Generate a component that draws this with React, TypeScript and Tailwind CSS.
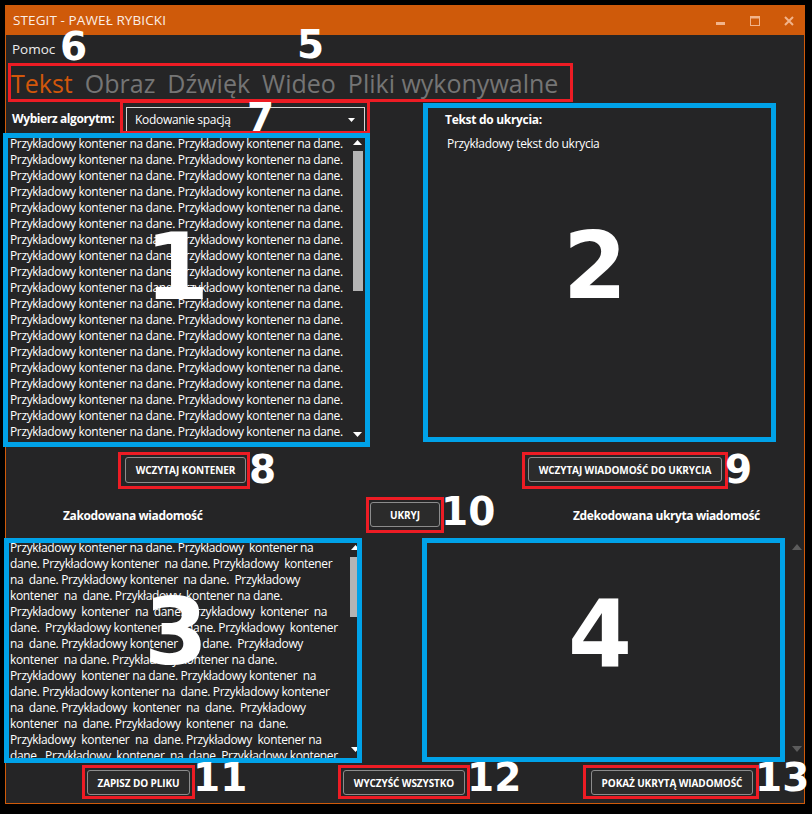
import React from 'react';

const kontenerLine = 'Przykładowy kontener na dane. Przykładowy kontener na dane.';

const encodedLines = [
  'Przykładowy kontener na dane. Przykładowy  kontener na',
  'dane. Przykładowy kontener  na dane. Przykładowy  kontener',
  'na  dane. Przykładowy kontener  na dane.  Przykładowy',
  'kontener  na  dane. Przykładowy  kontener na dane.',
  'Przykładowy  kontener  na  dane.  Przykładowy  kontener  na',
  'dane.  Przykładowy kontener  na  dane. Przykładowy  kontener',
  'na  dane. Przykładowy kontener  na  dane.  Przykładowy',
  'kontener  na dane. Przykładowy kontener na dane.',
  'Przykładowy  kontener na dane. Przykładowy kontener  na',
  'dane. Przykładowy kontener na  dane. Przykładowy kontener',
  'na  dane. Przykładowy  kontener  na  dane.  Przykładowy',
  'kontener  na  dane. Przykładowy  kontener  na  dane.',
  'Przykładowy  kontener  na  dane. Przykładowy  kontener na',
  'dane.  Przykładowy  kontener  na  dane. Przykładowy kontener',
];

// obramowanie adnotacji rysowane nad zawartością
const Mark = ({ blue, className, children }: { blue?: boolean; className?: string; children?: React.ReactNode }) => (
  <div className={`relative shrink-0 ${className ?? ''}`}>
    {children}
    <div
      className={`pointer-events-none absolute inset-0 ${
        blue ? 'border-[5px] border-[#00a2e8]' : 'border-[3px] border-[#ed1c24]'
      }`}
    />
  </div>
);

const Btn = ({ className, children }: { className?: string; children: React.ReactNode }) => (
  <button
    className={`flex items-center justify-center whitespace-nowrap rounded-[3px] border border-[#8c8c8c] bg-[#2b2b2b] text-[10px] font-bold leading-none tracking-[-0.1px] text-white ${className ?? ''}`}
  >
    {children}
  </button>
);

const Arrow = ({ up, className }: { up?: boolean; className?: string }) => (
  <svg width="9" height="5" viewBox="0 0 9 5" className={className}>
    {up ? <polygon points="0,5 9,5 4.5,0" fill="currentColor" /> : <polygon points="0,0 9,0 4.5,5" fill="currentColor" />}
  </svg>
);

const Num = ({ className, children }: { className: string; children: React.ReactNode }) => (
  <span className={`pointer-events-none absolute font-['DejaVu_Sans',sans-serif] font-bold leading-none text-white ${className}`}>
    {children}
  </span>
);

const App = () => {
  return (
    <div className="relative h-[814px] w-[812px] overflow-hidden bg-black font-['Open_Sans','Noto_Sans',sans-serif] text-white">
      <div className="ml-[5px] mt-[5px] flex h-[799px] w-[800px] flex-col border border-[#cf5a0a] bg-[#252526]">
        {/* pasek tytułu */}
        <div className="flex h-[29px] shrink-0 items-center bg-[#cf5a0a] pl-[7px] pr-[10px]">
          <span className="text-[13.5px] tracking-[0.1px] text-[#fbeee6]">STEGIT - PAWEŁ RYBICKI</span>
          <div className="ml-auto flex items-center gap-[24px] text-[#f2b48b]">
            <svg width="10" height="10" viewBox="0 0 10 10">
              <rect x="0" y="6" width="9" height="3" fill="currentColor" />
            </svg>
            <svg width="10" height="10" viewBox="0 0 10 10">
              <rect x="0.5" y="0.5" width="9" height="9" fill="none" stroke="currentColor" />
              <rect x="0" y="0" width="10" height="2.5" fill="currentColor" />
            </svg>
            <svg width="10" height="10" viewBox="0 0 10 10">
              <path d="M1 1 L9 9 M9 1 L1 9" stroke="currentColor" strokeWidth="2" />
            </svg>
          </div>
        </div>

        {/* menu */}
        <div className="flex h-[28px] shrink-0 items-center pl-[6px] text-[13.5px] text-[#ececec]">Pomoc</div>

        {/* zakładki */}
        <Mark className="ml-[2px] h-[39px] w-[565px]">
          <div className="flex h-full items-center gap-[12px] pl-[3px] pt-[2px] text-[25px] leading-none text-[#757575]">
            <span className="text-[#d2570b]">Tekst</span>
            <span>Obraz</span>
            <span>Dźwięk</span>
            <span>Wideo</span>
            <span>Pliki wykonywalne</span>
          </div>
        </Mark>

        <div className="-mt-[2px] flex shrink-0">
          {/* lewa kolumna */}
          <div className="-ml-[3px] flex w-[367px] flex-col">
            <div className="flex h-[34px] items-center justify-between">
              <span className="ml-[9px] whitespace-nowrap pt-[3px] text-[12px] font-bold tracking-[-0.4px]">Wybierz algorytm:</span>
              <Mark className="h-[34px] w-[250px] pl-[6px] pt-[7px]">
                <div className="flex h-[26px] w-[239px] items-center border border-[#d8d8d8] pl-[8px] pr-[9px] text-[12px] tracking-[-0.3px]">
                  <span>Kodowanie spacją</span>
                  <svg width="7" height="4" viewBox="0 0 7 4" className="ml-auto">
                    <polygon points="0,0 7,0 3.5,4" fill="#ffffff" />
                  </svg>
                </div>
              </Mark>
            </div>
            <Mark blue className="-mt-[1px] h-[314px] w-[367px]">
              <div className="flex h-full overflow-hidden pl-[7px] pr-[7px]">
                <div className="flex-1 overflow-hidden pt-[3px] text-[12px] leading-[16px] tracking-[-0.35px]">
                  {Array.from({ length: 19 }, (_, i) => (
                    <div key={i} className="whitespace-nowrap">{kontenerLine}</div>
                  ))}
                </div>
                <div className="flex w-[11px] flex-col items-center pt-[7px] pb-[10px] text-white">
                  <Arrow up />
                  <div className="mt-[6px] h-[140px] w-[10px] bg-[#b4b4b4]" />
                  <Arrow className="mt-auto" />
                </div>
              </div>
            </Mark>
          </div>

          {/* prawa kolumna */}
          <Mark blue className="ml-[53px] mt-[3px] h-[339px] w-[353px]">
            <div className="pl-[22px] pt-[9px] text-[12px] leading-[16px]">
              <div className="font-bold tracking-[-0.3px]">Tekst do ukrycia:</div>
              <div className="ml-[2px] mt-[8px] tracking-[-0.3px]">Przykładowy tekst do ukrycia</div>
            </div>
          </Mark>
        </div>

        {/* przyciski wczytywania */}
        <div className="mt-[5px] flex shrink-0 pl-[112px]">
          <Mark className="h-[37px] w-[132px] pl-[7px] pt-[5px]">
            <Btn className="h-[26px] w-[121px]">WCZYTAJ KONTENER</Btn>
          </Mark>
          <Mark className="ml-[272px] h-[37px] w-[206px] pl-[6px] pt-[5px]">
            <Btn className="h-[25px] w-[194px]">WCZYTAJ WIADOMOŚĆ DO UKRYCIA</Btn>
          </Mark>
        </div>

        {/* etykiety + ukryj */}
        <div className="mt-[8px] flex h-[36px] shrink-0 items-center text-[12px] font-bold tracking-[-0.4px]">
          <div className="w-[360px] pl-[57px] pt-[2px]">Zakodowana wiadomość</div>
          <Mark className="h-[36px] w-[78px] pl-[4px] pt-[5px]">
            <Btn className="h-[25px] w-[70px]">UKRYJ</Btn>
          </Mark>
          <div className="ml-[129px] pt-[2px]">Zdekodowana ukryta wiadomość</div>
        </div>

        {/* pola wynikowe */}
        <div className="mt-[5px] flex shrink-0">
          <Mark blue className="-ml-[2px] h-[225px] w-[358px]">
            <div className="flex h-full overflow-hidden pl-[6px] pr-[1px]">
              <div className="flex-1 overflow-hidden pt-[2px] text-[12px] leading-[16px] tracking-[-0.35px]">
                {encodedLines.map((l, i) => (
                  <div key={i} className="whitespace-pre">{l}</div>
                ))}
              </div>
              <div className="flex w-[11px] flex-col items-center pt-[7px] pb-[11px] text-white">
                <Arrow up />
                <div className="mt-[7px] h-[60px] w-[7px] self-start bg-[#b4b4b4]" />
                <Arrow className="mt-auto" />
              </div>
            </div>
          </Mark>
          <Mark blue className="ml-[60px] h-[224px] w-[363px]" />
          <div className="ml-[7px] flex h-[224px] w-[10px] flex-col pt-[6px] pb-[10px] text-[#5c5c5c]">
            <svg width="10" height="6" viewBox="0 0 10 6"><polygon points="0,6 10,6 5,0" fill="currentColor" /></svg>
            <svg width="10" height="6" viewBox="0 0 10 6" className="mt-auto"><polygon points="0,0 10,0 5,6" fill="currentColor" /></svg>
          </div>
        </div>

        {/* przyciski dolne */}
        <div className="mt-[2px] flex shrink-0">
          <Mark className="ml-[76px] h-[34px] w-[113px] pl-[5px] pt-[5px]">
            <Btn className="h-[25px] w-[103px]">ZAPISZ DO PLIKU</Btn>
          </Mark>
          <Mark className="ml-[143px] h-[34px] w-[132px] pl-[5px] pt-[5px]">
            <Btn className="h-[25px] w-[122px]">WYCZYŚĆ WSZYSTKO</Btn>
          </Mark>
          <Mark className="ml-[113px] h-[34px] w-[176px] pl-[8px] pt-[5px]">
            <Btn className="h-[25px] w-[162px]">POKAŻ UKRYTĄ WIADOMOŚĆ</Btn>
          </Mark>
        </div>
      </div>

      {/* numery adnotacji */}
      <Num className="left-[60px] top-[27px] text-[39px]">6</Num>
      <Num className="left-[297px] top-[25px] text-[39px]">5</Num>
      <Num className="left-[247px] top-[98px] text-[39px]">7</Num>
      <Num className="left-[249px] top-[450px] text-[39px]">8</Num>
      <Num className="left-[725px] top-[450px] text-[39px]">9</Num>
      <Num className="left-[441px] top-[492px] text-[39px]">10</Num>
      <Num className="left-[193px] top-[758px] text-[39px]">11</Num>
      <Num className="left-[467px] top-[758px] text-[39px]">12</Num>
      <Num className="left-[755px] top-[758px] text-[39px]">13</Num>
      <Num className="left-[145px] top-[222px] text-[92px]">1</Num>
      <Num className="left-[563px] top-[221px] text-[92px]">2</Num>
      <Num className="left-[144px] top-[587px] text-[92px]">3</Num>
      <Num className="left-[568px] top-[589px] text-[92px]">4</Num>
    </div>
  );
};

export default App;
